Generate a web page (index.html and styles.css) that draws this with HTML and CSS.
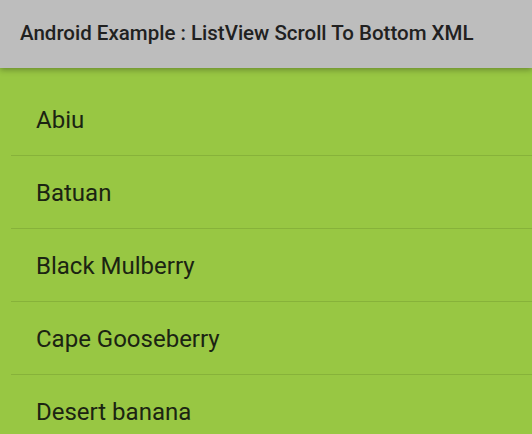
FILE: index.html
```html
<!DOCTYPE html>
<html lang="en">
<head>
  <meta charset="UTF-8" />
  <title>ListView Scroll To Bottom XML</title>
  <meta name="viewport" content="width=device-width, initial-scale=1.0" />
  <link rel="stylesheet" href="styles.css">
</head>
<body>
  <div class="toolbar">
    <h1>Android Example : ListView Scroll To Bottom XML</h1>
  </div>

  <ul class="list">
    <li>Abiu</li>
    <li>Batuan</li>
    <li>Black Mulberry</li>
    <li>Cape Gooseberry</li>
    <li>Desert banana</li>
    <li>Eggfruit</li>
  </ul>
</body>
</html>
```

FILE: styles.css
```css
body {
  font-family: 'Roboto', sans-serif;
  background: #98c743;
  margin: 0;
  height: 100vh;
  overflow: hidden;
}
.toolbar {
  position: relative;
  z-index: 1;
  height: 68px;
  background: #bdbdbd;
  box-shadow: 0 2px 6px rgba(0,0,0,0.3);
  display: flex;
  align-items: center;
  padding-left: 20px;
  padding-bottom: 3px;
  box-sizing: border-box;
}
.toolbar h1 {
  margin: 0;
  font-size: 20.5px;
  font-weight: 500;
  color: #212121;
  white-space: nowrap;
}
.list {
  list-style: none;
  margin: 0;
  padding: 15px 0 0 11px;
}
.list li {
  height: 70px;
  padding: 2px 0 0 25px;
  line-height: 70px;
  font-size: 24px;
  color: #1b2412;
  border-bottom: 1px solid #87b23a;
}
```
